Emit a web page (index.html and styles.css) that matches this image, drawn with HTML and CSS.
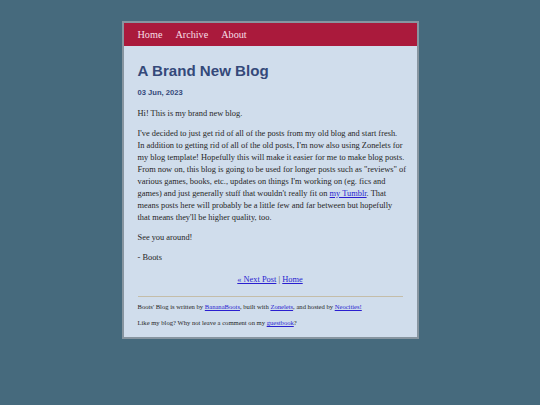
FILE: index.html
```html
<!DOCTYPE html>
<html lang="en">

<head>
    <meta charset="UTF-8">
    <meta name="viewport" content="width=device-width, initial-scale=1.0">
    <title>Boots' Blog</title>
    <link rel="stylesheet" href="styles.css">
</head>

<body>
    <div class="container">
        <div class="header">
            <a href="#">Home</a>
            <a href="#">Archive</a>
            <a href="#">About</a>
        </div>
        <div class="main">
            <h1>A Brand New Blog</h1>
            <h4 class="date">03 Jun, 2023</h4>
            <p>Hi! This is my brand new blog.</p>
            <p class="lines">I've decided to just get rid of all of the posts from my old blog and start fresh.<br>
                In addition to getting rid of all of the old posts, I'm now also using Zonelets for<br>
                my blog template! Hopefully this will make it easier for me to make blog posts.<br>
                From now on, this blog is going to be used for longer posts such as "reviews" of<br>
                various games, books, etc., updates on things I'm working on (eg. fics and<br>
                games) and just generally stuff that wouldn't really fit on <a href="#">my Tumblr</a>. That<br>
                means posts here will probably be a little few and far between but hopefully<br>
                that means they'll be higher quality, too.</p>
            <p>See you around!</p>
            <p>- Boots</p>
            <div class="nextprev">
                <a href="#">« Next Post</a> | <a href="#">Home</a>
            </div>
            <hr>
            <div class="footer">
                <p>Boots' Blog is written by <a href="#">BananaBoots</a>, built with <a href="#">Zonelets</a>, and hosted by <a href="#">Neocities!</a></p>
                <p>Like my blog? Why not leave a comment on my <a href="#">guestbook</a>?</p>
            </div>
        </div>
    </div>
</body>

</html>
```

FILE: styles.css
```css
body {
    margin: 0;
    padding-top: 21px;
    background: #466a7d;
    font-family: "Liberation Serif", serif;
    color: #262626;
}

a {
    color: #2a1fd0;
}

.container {
    width: 293px;
    margin: 0 auto;
    border: 2px solid #8795a0;
    background: #d0ddec;
}

.header {
    height: 23px;
    display: flex;
    align-items: center;
    gap: 13px;
    padding: 0 14px;
    background: #aa1a3c;
}

.header a {
    color: #f7dfe6;
    text-decoration: none;
    font-size: 10.2px;
}

.main {
    padding: 16px 14px 10px;
}

h1 {
    margin: 0 0 8px;
    font-family: "Liberation Sans", sans-serif;
    font-size: 15.1px;
    line-height: 18px;
    color: #34497a;
}

.date {
    margin: 0 0 10px;
    font-family: "Liberation Sans", sans-serif;
    font-size: 7.6px;
    line-height: 10px;
    color: #34497a;
}

p {
    margin: 0 0 8px;
    font-size: 8.4px;
    line-height: 12px;
}

/* keep the long post paragraph on its own line breaks */
.lines {
    white-space: nowrap;
}

.nextprev {
    margin-top: 10px;
    text-align: center;
    font-size: 8.4px;
    line-height: 12px;
    color: #555;
}

hr {
    margin: 10px 0 5px;
    border: 0;
    border-top: 1px solid #c4bda9;
}

.footer p {
    margin: 0 0 7px;
    font-size: 6.6px;
    line-height: 9px;
}

.footer p:last-child {
    margin-bottom: 0;
}
```
